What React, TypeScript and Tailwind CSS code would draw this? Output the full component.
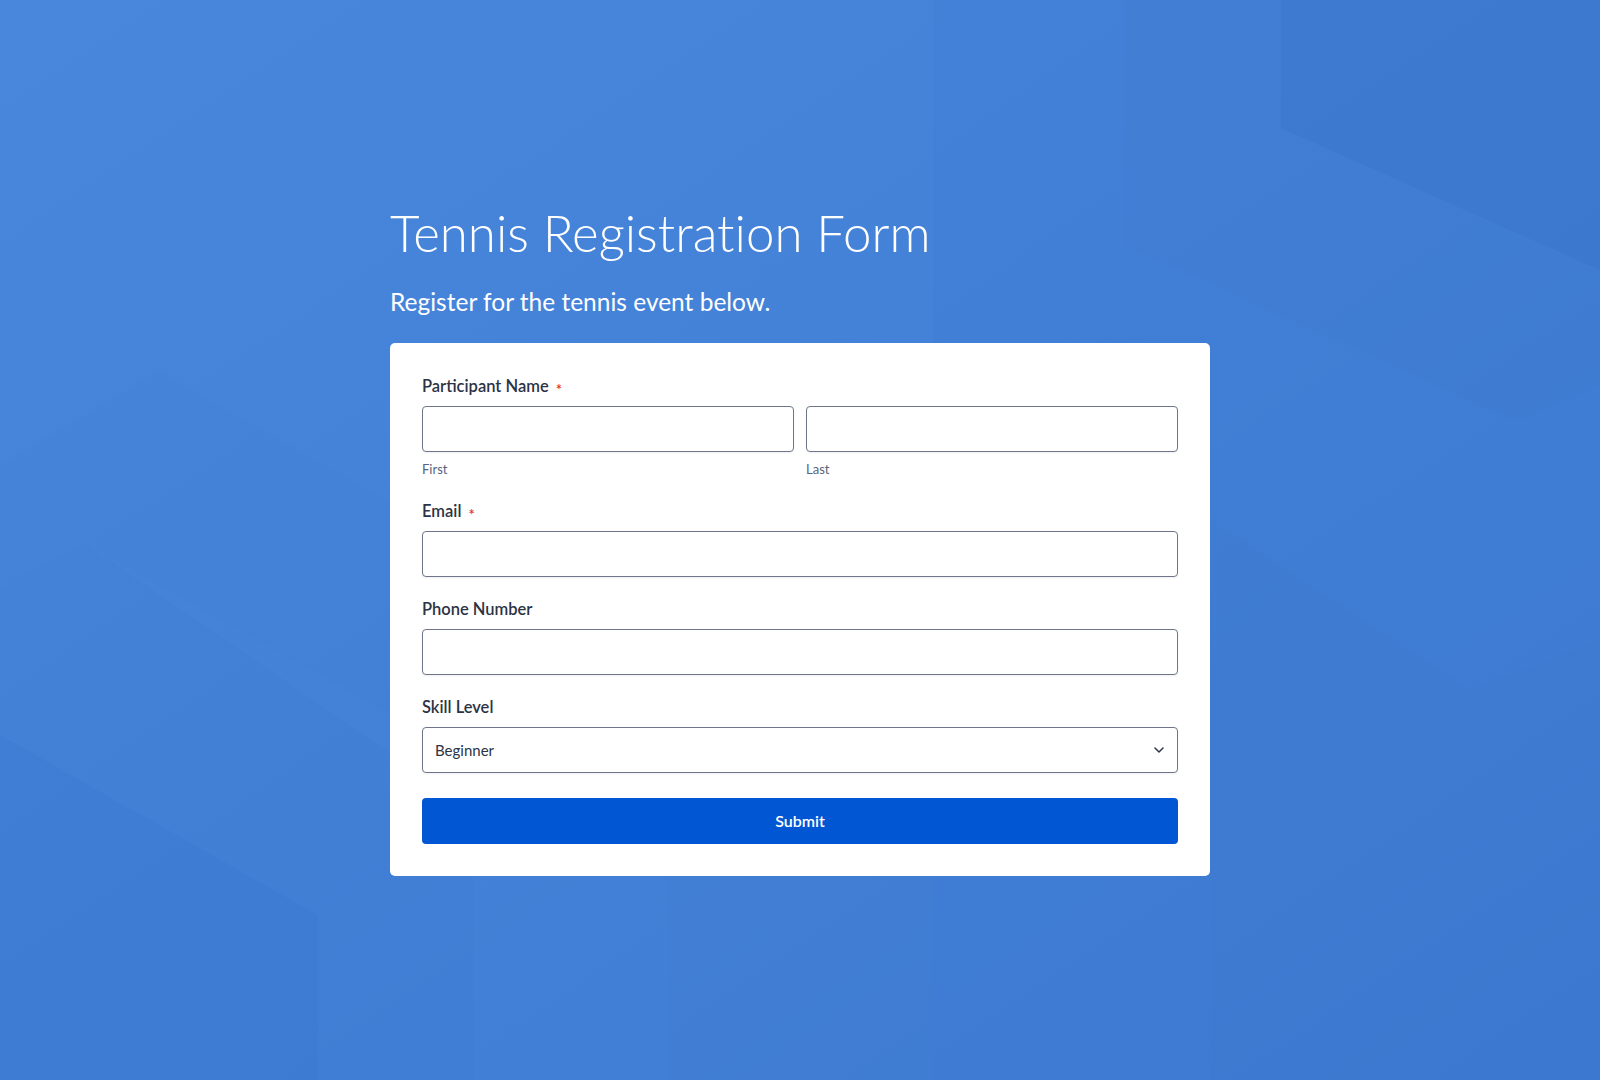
import React, { useState } from 'react';

function Backdrop() {
    // soft geometric shapes behind the form
    return (
        <svg className="absolute inset-0 w-full h-full" viewBox="0 0 1600 1080" preserveAspectRatio="none">
            <defs>
                <linearGradient id="bg" x1="0" y1="0" x2="1" y2="1">
                    <stop offset="0" stopColor="#4887dc" />
                    <stop offset="1" stopColor="#3e7bd3" />
                </linearGradient>
            </defs>
            <rect width="1600" height="1080" fill="url(#bg)" />
            <polygon points="933,0 1126,0 1126,245 1517,421 1600,385 1600,1080 933,1080" fill="#1d4fa8" opacity="0.03" />
            <polygon points="1126,0 1600,0 1600,385 1517,421 1126,245" fill="#1d4fa8" opacity="0.07" />
            <polygon points="1281,0 1600,0 1600,270 1281,128" fill="#1d4fa8" opacity="0.08" />
            <polygon points="1210,520 1470,690 1600,640 1600,1080 1210,1080" fill="#1d4fa8" opacity="0.02" />
            <polygon points="0,465 158,372 600,620 600,830 85,544 0,590" fill="#1d4fa8" opacity="0.02" />
            <polygon points="0,590 85,544 473,810 473,1080 0,1080" fill="#1d4fa8" opacity="0.035" />
            <polygon points="0,735 318,915 318,1080 0,1080" fill="#1d4fa8" opacity="0.05" />
            <polygon points="668,876 933,876 933,1080 668,1080" fill="#1d4fa8" opacity="0.02" />
        </svg>
    );
}

function FieldLabel({ text, required }: { text: string; required?: boolean }) {
    return (
        <label className="flex items-center h-[22px] mb-[9px] text-[16.5px] font-semibold text-[#2c3345]">
            {text}
            {required && <span className="ml-[7px] text-[15px] leading-none translate-y-[3px] text-[#e0301e]">*</span>}
        </label>
    );
}

function TextBox({ value, onChange }: { value: string; onChange: (v: string) => void }) {
    return (
        <input
            type="text"
            value={value}
            onChange={e => onChange(e.target.value)}
            className="block w-full h-[46px] px-3 rounded-[4px] border border-[#6f7689] bg-white text-[15px] text-[#2c3345] shadow-[0_1px_2px_rgba(40,50,70,0.08)] outline-none"
        />
    );
}

export default function App() {
    const [first, setFirst] = useState('');
    const [last, setLast] = useState('');
    const [email, setEmail] = useState('');
    const [phone, setPhone] = useState('');
    const [level, setLevel] = useState('Beginner');

    return (
        <div className="relative w-full h-[1080px] overflow-hidden font-['Lato','Noto_Sans',sans-serif]">
            <Backdrop />

            <main className="relative w-[820px] mx-auto pt-[203px]">
                <h1 className="text-[51px] leading-[60px] font-light text-white [font-variant-ligatures:none]">Tennis Registration Form</h1>
                <p className="mt-[24px] text-[24.5px] leading-[30px] font-normal text-white">Register for the tennis event below.</p>

                <form
                    className="mt-[26px] bg-white rounded-[5px] p-8"
                    onSubmit={e => e.preventDefault()}
                >
                    {/* Participant name */}
                    <FieldLabel text="Participant Name" required />
                    <div className="grid grid-cols-2 gap-3">
                        <div>
                            <TextBox value={first} onChange={setFirst} />
                            <div className="mt-[9px] text-[13px] leading-4 text-[#57647e]">First</div>
                        </div>
                        <div>
                            <TextBox value={last} onChange={setLast} />
                            <div className="mt-[9px] text-[13px] leading-4 text-[#57647e]">Last</div>
                        </div>
                    </div>

                    <div className="mt-[23px]">
                        <FieldLabel text="Email" required />
                        <TextBox value={email} onChange={setEmail} />
                    </div>

                    <div className="mt-[21px]">
                        <FieldLabel text="Phone Number" />
                        <TextBox value={phone} onChange={setPhone} />
                    </div>

                    <div className="mt-[21px]">
                        <FieldLabel text="Skill Level" />
                        <div className="relative">
                            <select
                                value={level}
                                onChange={e => setLevel(e.target.value)}
                                className="block w-full h-[46px] pl-3 pr-10 appearance-none rounded-[4px] border border-[#6f7689] bg-white text-[15px] text-[#2c3345] shadow-[0_1px_2px_rgba(40,50,70,0.08)] outline-none"
                            >
                                <option>Beginner</option>
                                <option>Intermediate</option>
                                <option>Advanced</option>
                            </select>
                            <svg className="absolute right-[14px] top-1/2 -translate-y-1/2 pointer-events-none" width="10" height="6" viewBox="0 0 10 6" fill="none">
                                <path d="M1 1l4 4 4-4" stroke="#2c3345" strokeWidth="1.5" strokeLinecap="round" strokeLinejoin="round" />
                            </svg>
                        </div>
                    </div>

                    <button
                        type="submit"
                        className="mt-[25px] w-full h-[46px] rounded-[4px] bg-[#0156d3] text-white text-[16px] font-semibold"
                    >
                        Submit
                    </button>
                </form>
            </main>
        </div>
    );
}
